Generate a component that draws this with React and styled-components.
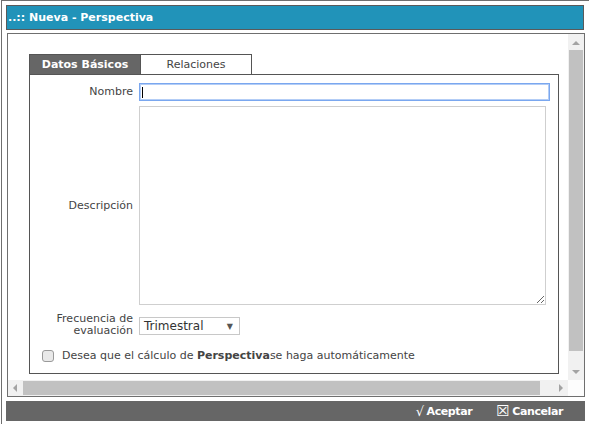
import React from "react"
import styled, { createGlobalStyle } from "styled-components"

const Global = createGlobalStyle`
    html, body {
        margin: 0;
        background: #fff;
        font-family: "DejaVu Sans", Verdana, sans-serif;
        font-size: 11px;
        color: #444;
    }
`

const Dialog = styled.div`
    box-sizing: border-box;
    margin-left: 1px;
    width: 588px;
    height: 424px;
    border-top: 1px solid #6f6f6f;
    border-left: 1px solid #6f6f6f;
    padding: 4px 3px 0 4px;
    display: flex;
    flex-direction: column;
`

const Header = styled.div`
    box-sizing: border-box;
    width: 578px;
    height: 25px;
    background: #2193b9;
    border: 1px solid #5a5a5a;
    color: #fff;
    font-weight: bold;
    display: flex;
    align-items: center;
    padding-left: 1px;
`

const Panel = styled.div`
    box-sizing: border-box;
    margin-top: 3px;
    width: 578px;
    height: 364px;
    border: 1px solid #6f6f6f;
    display: grid;
    grid-template-columns: 1fr 16px;
    grid-template-rows: 1fr 16px;
    margin-left: 1px;
`

const Viewport = styled.div`
    overflow: hidden;
    padding: 20px 0 0 21px;
`

const VBar = styled.div`
    background: #f1f1f1;
    display: flex;
    flex-direction: column;
    align-items: center;
    padding: 0 1px;
`

const HBar = styled.div`
    background: #f1f1f1;
    display: flex;
    align-items: center;
    padding: 1px 0;
`

const Corner = styled.div`
    background: #fdfdfd;
`

const Arrow = styled.div`
    width: 0;
    height: 0;
    flex: none;
    margin: ${p => p.$m};
    border-style: solid;
    border-color: transparent;
    border-width: ${p => p.$w};
    ${p => p.$side}: 4px solid #a3a3a3;
`

const Thumb = styled.div`
    background: #c1c1c1;
    flex: 1;
    align-self: stretch;
`

const Tabs = styled.div`
    display: flex;
`

const Tab = styled.div`
    box-sizing: border-box;
    width: ${p => p.$w}px;
    height: 20px;
    display: flex;
    align-items: center;
    justify-content: center;
    background: ${p => (p.$active ? "#666" : "#fff")};
    color: ${p => (p.$active ? "#fff" : "#444")};
    font-weight: ${p => (p.$active ? "bold" : "normal")};
    border: 1px solid #555;
    border-bottom: none;
    border-left: ${p => (p.$active ? "1px solid #555" : "none")};
`

const TabBody = styled.div`
    box-sizing: border-box;
    width: 530px;
    height: 300px;
    border: 1px solid #555;
    padding: 8px 0 0 0;
    display: flex;
    flex-direction: column;
    gap: 5px;
`

const Row = styled.div`
    display: flex;
    align-items: center;
    margin-top: ${p => p.$top || 0}px;
`

const Label = styled.div`
    width: 103px;
    text-align: right;
    padding-right: 6px;
    line-height: 12px;
    flex: none;
`

const TextBox = styled.div`
    box-sizing: border-box;
    width: 411px;
    height: 18px;
    border: 1px solid #7aa7ef;
    box-shadow: 0 0 0 1px #b3cdf6 inset;
    display: flex;
    align-items: center;
    padding-left: 2px;
`

const Caret = styled.div`
    width: 1px;
    height: 11px;
    background: #000;
`

const Area = styled.textarea`
    box-sizing: border-box;
    width: 407px;
    height: 199px;
    border: 1px solid #cfcfcf;
    margin: 0;
    resize: both;
    outline: none;
    font: inherit;
`

const Select = styled.div`
    box-sizing: border-box;
    width: 101px;
    height: 18px;
    border: 1px solid #c8c8c8;
    display: flex;
    align-items: center;
    justify-content: space-between;
    padding: 0 6px 0 4px;
    color: #333;
    font-size: 12px;
    margin-top: 2px;
`

const Caretdown = styled.span`
    font-size: 8px;
    color: #555;
`

const Check = styled.div`
    box-sizing: border-box;
    width: 12px;
    height: 12px;
    border: 1px solid #9a9a9a;
    border-radius: 3px;
    background: #e9e9e9;
    margin: 0 8px 0 12px;
`

const Footer = styled.div`
    box-sizing: border-box;
    margin-top: 4px;
    width: 579px;
    height: 20px;
    background: #666;
    color: #fff;
    font-weight: bold;
    font-size: 11px;
    letter-spacing: -0.4px;
    display: flex;
    align-items: center;
    justify-content: flex-end;
    gap: 24px;
    padding-right: 22px;
`

const FootButton = styled.span`
    display: flex;
    align-items: center;
    gap: 3px;
`

const Glyph = styled.span`
    font-weight: normal;
    font-size: ${p => p.$size}px;
`

export default function App() {
    return (
        <>
            <Global />
            <Dialog>
                <Header>..:: Nueva - Perspectiva</Header>
                <Panel>
                    <Viewport>
                        <Tabs>
                            <Tab $active $w={112}>Datos Básicos</Tab>
                            <Tab $w={111}>Relaciones</Tab>
                        </Tabs>
                        <TabBody>
                            <Row>
                                <Label>Nombre</Label>
                                <TextBox><Caret /></TextBox>
                            </Row>
                            <Row>
                                <Label>Descripción</Label>
                                <Area readOnly />
                            </Row>
                            <Row $top={3}>
                                <Label>Frecuencia de<br />evaluación</Label>
                                <Select>Trimestral<Caretdown>▼</Caretdown></Select>
                            </Row>
                            <Row $top={7}>
                                <Check />
                                <span>Desea que el cálculo de <b>Perspectiva</b>se haga automáticamente</span>
                            </Row>
                        </TabBody>
                    </Viewport>
                    <VBar>
                        <Arrow $m="7px 0 5px" $w="0 4px" $side="border-bottom" />
                        <Thumb />
                        <Arrow $m="19px 0 6px" $w="0 4px" $side="border-top" />
                    </VBar>
                    <HBar>
                        <Arrow $m="0 6px 0 5px" $w="4px 0" $side="border-right" />
                        <Thumb />
                        <Arrow $m="0 5px 0 19px" $w="4px 0" $side="border-left" />
                    </HBar>
                    <Corner />
                </Panel>
                <Footer>
                    <FootButton><Glyph $size={13}>√</Glyph>Aceptar</FootButton>
                    <FootButton><Glyph $size={15}>☒</Glyph>Cancelar</FootButton>
                </Footer>
            </Dialog>
        </>
    )
}
